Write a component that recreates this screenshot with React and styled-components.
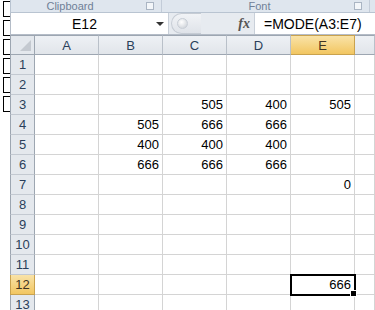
import React from "react";
import styled, { createGlobalStyle, css } from "styled-components";

const GlobalStyle = createGlobalStyle`
  html, body {
    margin: 0;
    padding: 0;
    background: #ffffff;
    font-family: "Liberation Sans", Arial, sans-serif;
  }
`;

const Page = styled.div`
  width: 375px;
  height: 310px;
  overflow: hidden;
  display: flex;
  background: #ffffff;
`;

const Gutter = styled.div`
  width: 10px;
  flex-shrink: 0;
  display: flex;
  flex-direction: column;
  gap: 3px;
  padding-top: 1px;
`;

const Bracket = styled.div`
  margin-left: 3px;
  width: 7px;
  height: 14px;
  border: 1px solid #000;
  border-right: none;
`;

const Main = styled.div`
  flex: 1;
  display: flex;
  flex-direction: column;
  min-width: 0;
`;

const RibbonLabels = styled.div`
  height: 12px;
  display: flex;
  background: #dfe6ee;
  border-bottom: 1px solid #b9c4d1;
  border-left: 1px solid #b9c4d1;
`;

const Group = styled.div`
  width: ${(p) => p.$width}px;
  position: relative;
  display: flex;
  justify-content: center;
  align-items: center;
  border-right: 1px solid #c3ccd8;
  font-family: "Liberation Sans", sans-serif;
  font-size: 11px;
  line-height: 12px;
  color: #6f8097;
`;

const GroupLabel = styled.span`
  margin-left: ${(p) => p.$shift || 0}px;
`;

const Launcher = styled.span`
  position: absolute;
  right: 7px;
  top: 2px;
  width: 6px;
  height: 6px;
  border: 1px solid #aab5c3;
  background: #f3f6f9;
`;

const FormulaBar = styled.div`
  height: 25px;
  display: flex;
  background: #e7ebf0;
  border-bottom: 1px solid #b4bcc7;
  border-left: 1px solid #b4bcc7;
`;

const NameBox = styled.div`
  width: 157px;
  display: flex;
  align-items: center;
  background: #ffffff;
  border-right: 1px solid #c9d0d9;
`;

const NameText = styled.span`
  flex: 1;
  text-align: center;
  font-size: 14px;
  color: #000;
  padding-left: 2px;
`;

const DropArrow = styled.span`
  width: 0;
  height: 0;
  margin-right: 4px;
  border-left: 4px solid transparent;
  border-right: 4px solid transparent;
  border-top: 4px solid #333;
`;

const Handle = styled.div`
  width: 85px;
  display: flex;
  align-items: center;
  justify-content: space-between;
  padding: 0 4px 0 2px;
  box-sizing: border-box;
`;

const Pill = styled.div`
  width: 30px;
  height: 21px;
  border-radius: 11px 0 0 11px;
  border: 1px solid #c6ccd4;
  border-right: none;
  background: linear-gradient(#f1f3f6, #dfe3e9);
  display: flex;
  align-items: center;
  padding-left: 5px;
  box-sizing: border-box;
`;

const Knob = styled.span`
  width: 9px;
  height: 9px;
  border-radius: 50%;
  background: radial-gradient(circle at 40% 35%, #ffffff, #c6cbd2);
  border: 1px solid #c8ced6;
`;

const Fx = styled.span`
  font-family: "Liberation Serif", "Times New Roman", serif;
  font-style: italic;
  font-weight: bold;
  font-size: 14px;
  color: #555;
`;

const FormulaInput = styled.div`
  flex: 1;
  display: flex;
  align-items: center;
  background: #ffffff;
  border-left: 1px solid #c9d0d9;
  padding-left: 9px;
  font-size: 14px;
  color: #000;
`;

const Spacer = styled.div`
  height: 2px;
  background: #ffffff;
`;

const Sheet = styled.div`
  display: grid;
  grid-template-columns: 25px repeat(5, 64px) 1fr;
  grid-auto-rows: 20px;
`;

const highlighted = css`
  background: linear-gradient(#f9e3a8, #f2c661);
  border-color: #c9a24e;
  color: #403422;
`;

const Corner = styled.div`
  position: relative;
  background: #e4e8ed;
  border: 1px solid #9da6b1;
  box-sizing: border-box;

  &::after {
    content: "";
    position: absolute;
    right: 3px;
    bottom: 3px;
    width: 0;
    height: 0;
    border-left: 11px solid transparent;
    border-bottom: 11px solid #c4c9d0;
  }
`;

const ColHead = styled.div`
  display: flex;
  align-items: center;
  justify-content: center;
  background: linear-gradient(#eef1f5, #e1e5ea);
  border-top: 1px solid #9da6b1;
  border-right: 1px solid #b9c0c9;
  border-bottom: 1px solid #9da6b1;
  box-sizing: border-box;
  font-size: 13px;
  color: #2a3f5a;
  ${(p) => p.$active && highlighted}
`;

const RowHead = styled.div`
  display: flex;
  align-items: center;
  justify-content: center;
  background: #e4e8ed;
  border-left: 1px solid #9da6b1;
  border-right: 1px solid #9da6b1;
  border-bottom: 1px solid #c3c9d1;
  box-sizing: border-box;
  font-size: 13px;
  color: #2a3f5a;
  ${(p) => p.$active && highlighted}
`;

const Cell = styled.div`
  position: relative;
  display: flex;
  align-items: flex-end;
  justify-content: flex-end;
  padding: 0 3px 2px 0;
  border-right: 1px solid #d4d4d4;
  border-bottom: 1px solid #d4d4d4;
  box-sizing: border-box;
  font-size: 13px;
  color: #000;

  ${(p) =>
    p.$selected &&
    css`
      outline: 2px solid #000;
      outline-offset: -1px;
      z-index: 1;

      &::after {
        content: "";
        position: absolute;
        right: -3px;
        bottom: -3px;
        width: 5px;
        height: 5px;
        background: #000;
        border: 1px solid #fff;
      }
    `}
`;

const columns = ["A", "B", "C", "D", "E", ""];

const values = {
  3: { C: 505, D: 400, E: 505 },
  4: { B: 505, C: 666, D: 666 },
  5: { B: 400, C: 400, D: 400 },
  6: { B: 666, C: 666, D: 666 },
  7: { E: 0 },
  12: { E: 666 },
};

const rows = Array.from({ length: 13 }, (_, i) => i + 1);

export default function App() {
  return (
    <Page>
      <GlobalStyle />
      <Gutter>
        {Array.from({ length: 6 }).map((_, i) => (
          <Bracket key={`bracket_${i}`} />
        ))}
      </Gutter>
      <Main>
        <RibbonLabels>
          <Group $width={150}>
            <GroupLabel $shift={-32}>Clipboard</GroupLabel>
            <Launcher />
          </Group>
          <Group $width={207}>
            <GroupLabel $shift={-12}>Font</GroupLabel>
            <Launcher />
          </Group>
        </RibbonLabels>
        <FormulaBar>
          <NameBox>
            <NameText>E12</NameText>
            <DropArrow />
          </NameBox>
          <Handle>
            <Pill>
              <Knob />
            </Pill>
            <Fx>fx</Fx>
          </Handle>
          <FormulaInput>=MODE(A3:E7)</FormulaInput>
        </FormulaBar>
        <Spacer />
        <Sheet>
          <Corner />
          {columns.map((c, i) => (
            <ColHead key={`col_${i}`} $active={c === "E"}>
              {c}
            </ColHead>
          ))}
          {rows.map((r) => (
            <React.Fragment key={`row_${r}`}>
              <RowHead $active={r === 12}>{r}</RowHead>
              {columns.map((c, i) => (
                <Cell key={`cell_${r}_${i}`} $selected={r === 12 && c === "E"}>
                  {values[r] && values[r][c] !== undefined ? values[r][c] : ""}
                </Cell>
              ))}
            </React.Fragment>
          ))}
        </Sheet>
      </Main>
    </Page>
  );
}
